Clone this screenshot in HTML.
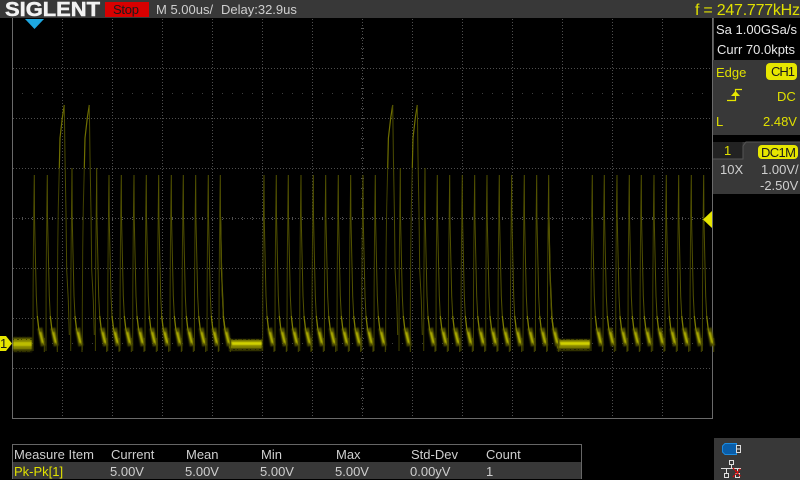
<!DOCTYPE html>
<html lang="en">
<head>
<meta charset="utf-8">
<title>SIGLENT Oscilloscope</title>
<style>
html,body{margin:0;padding:0;background:#000;width:800px;height:480px;overflow:hidden}
svg{display:block}
text{font-family:"Liberation Sans",sans-serif;font-size:13px;fill:#cfcfcf}
.y{fill:#e0e000}
.k{fill:#1a1a1a}
</style>
</head>
<body>
<svg width="800" height="480" viewBox="0 0 800 480" xmlns="http://www.w3.org/2000/svg">
<defs>
<filter id="b" x="-100%" y="-30%" width="300%" height="160%"><feGaussianBlur stdDeviation="0.7"/></filter>
<filter id="n" x="-5%" y="-30%" width="110%" height="160%"><feGaussianBlur stdDeviation="0.6"/></filter>
<g id="d" fill="none">
<path d="M-1.3,351 L-1.2,291 L-.8,240 L-.5,217" stroke="#424200"/>
<path d="M5.5,328 L9,346" stroke="#4c4c00" stroke-width="5" filter="url(#b)"/>
<path d="M3,316 L4.5,329 L7,338 L10,345" stroke="#7c7c00" stroke-width="1.3"/>
<path d="M6,332 L8.5,343" stroke="#b0b000" stroke-width="2.2" filter="url(#b)"/>
<path d="M10,338 L10,352" stroke="#4c4c00"/>
<path d="M.2,217 L1,253 L2,296 L3,316" stroke="#525200"/>
</g>
<g id="p" fill="none">
<use href="#d"/>
<path d="M-.5,217 L-.2,190 L0,175 L.2,217" stroke="#525200"/>
</g>
<g id="q" fill="none">
<use href="#d"/>
<path d="M-.5,217 L-.2,190 L0,168 L.2,217" stroke="#525200"/>
</g>
<g id="t" fill="none">
<path d="M-7,350 L-7,313 L-6.6,250 L-6,207 L-5,168" stroke="#424200"/>
<path d="M-5,168 L-4.3,138 L-2,118 L0,105" stroke="#707000" stroke-width="1.2"/>
<path d="M0,105 L.7,157 L1.7,213 L2.4,270 L4,300 L5,335" stroke="#4c4c00"/>
</g>
</defs>

<!-- grid -->
<g fill="none" stroke="#4e4e4e" shape-rendering="crispEdges">
<path stroke-dasharray="1 2" d="M13,68.5H712M13,118.5H712M13,168.5H712M13,218.5H712M13,268.5H712M13,318.5H712M13,368.5H712"/>
<path stroke-dasharray="1 2" d="M62.5,19V418M112.5,19V418M162.5,19V418M212.5,19V418M262.5,19V418M312.5,19V418M362.5,19V418M412.5,19V418M462.5,19V418M512.5,19V418M562.5,19V418M612.5,19V418M662.5,19V418"/>
<path stroke-dasharray="1 9" stroke="#404040" d="M22,93.5H712M22,343.5H712"/>
<path stroke-dasharray="1 9" stroke="#555" d="M22,217.5H712M22,219.5H712"/>
<path stroke-dasharray="1 9" stroke="#555" d="M361.5,28V418M363.5,28V418"/>
</g>
<path d="M12.5,18V418.5H712.5V18" fill="none" stroke="#6a6a6a" shape-rendering="crispEdges"/>

<!-- baseline bands -->
<g filter="url(#n)">
<rect x="13" y="337" width="19" height="15" fill="#3e3e00"/>
<rect x="13" y="339" width="19" height="10" fill="#858500"/>
<rect x="13" y="342" width="19" height="4" fill="#bcbc00"/>
<rect x="229" y="339" width="33" height="12" fill="#3e3e00"/>
<rect x="229" y="340" width="33" height="8" fill="#858500"/>
<rect x="229" y="342" width="33" height="3" fill="#d0d000"/>
<rect x="557" y="339" width="33" height="12" fill="#3e3e00"/>
<rect x="557" y="340" width="33" height="8" fill="#858500"/>
<rect x="557" y="342" width="33" height="3" fill="#d0d000"/>
</g>
<g fill="none" stroke="#000" stroke-opacity=".45" stroke-dasharray="1 3 2 2 1 4" shape-rendering="crispEdges">
<path d="M13,336.5H32M13,351.5H32M229,349.5H262M557,349.5H590M13,339.5H32M229,339.5H262M557,339.5H590"/>
</g>
<g fill="none">
<path d="M220.5,217 L221.5,270 L223.5,318 L225.5,332 L231,341" stroke="#7c7c00" stroke-width="1.3"/>
<path d="M548.9,217 L549.9,270 L551.9,318 L553.9,332 L559,341" stroke="#7c7c00" stroke-width="1.3"/>
</g>

<!-- pulses -->
<use href="#p" x="34.3"/><use href="#p" x="47.3"/><use href="#t" x="64.3"/><use href="#q" x="72"/><use href="#t" x="89.3"/><use href="#q" x="96.7"/>
<use href="#p" x="109"/><use href="#p" x="121.3"/><use href="#p" x="134"/><use href="#p" x="146.3"/><use href="#p" x="158.7"/><use href="#p" x="171.3"/><use href="#p" x="183.3"/><use href="#p" x="195.7"/><use href="#p" x="208.3"/><use href="#p" x="220.3"/>
<use href="#p" x="264"/><use href="#p" x="276.3"/><use href="#p" x="288.3"/><use href="#p" x="301"/><use href="#p" x="313.3"/><use href="#p" x="325.7"/><use href="#p" x="338.3"/><use href="#p" x="350.7"/><use href="#p" x="363"/><use href="#p" x="375.3"/>
<use href="#t" x="392.7"/><use href="#q" x="400.3"/><use href="#t" x="417.3"/><use href="#q" x="425"/>
<use href="#p" x="437.3"/><use href="#p" x="449.7"/><use href="#p" x="462.3"/><use href="#p" x="474.7"/><use href="#p" x="487"/><use href="#p" x="499.3"/><use href="#p" x="511.7"/><use href="#p" x="524.3"/><use href="#p" x="536.7"/><use href="#p" x="548.7"/>
<use href="#p" x="592.3"/><use href="#p" x="604.3"/><use href="#p" x="617"/><use href="#p" x="629.3"/><use href="#p" x="641.3"/><use href="#p" x="654"/><use href="#p" x="666.3"/><use href="#p" x="678.7"/><use href="#p" x="691.3"/><use href="#p" x="703.7"/>

<!-- header -->
<rect x="0" y="0" width="800" height="18" fill="#383838"/>
<text x="5" y="16" textLength="95" lengthAdjust="spacingAndGlyphs" style="font-size:20px;font-weight:bold;fill:#f2f2f2;stroke:#f2f2f2;stroke-width:.5">SIGLENT</text>
<rect x="105" y="2" width="44" height="15" fill="#d80000"/>
<text x="113" y="14" class="k" textLength="26">Stop</text>
<text x="156" y="14">M 5.00us/</text>
<text x="221" y="14">Delay:32.9us</text>
<text x="695" y="15" class="y" textLength="105" style="font-size:16px">f = 247.777kHz</text>
<path d="M25,19H44L34.5,29Z" fill="#1ea7e0"/>

<!-- markers -->
<path d="M0,336H6L12,343.5L6,351H0Z" fill="#e6e600"/>
<text x="0" y="348" class="k" style="font-size:13px">1</text>
<path d="M712,211V228L703,219.5Z" fill="#e6e600"/>

<!-- right panels -->
<rect x="713" y="18" width="87" height="42" fill="#000"/>
<path d="M713.5,18V60" stroke="#555"/>
<text x="716" y="34" style="fill:#e8e8e8">Sa 1.00GSa/s</text>
<text x="717" y="54" style="fill:#e8e8e8">Curr 70.0kpts</text>

<rect x="713" y="60" width="87" height="75" fill="#383838"/>
<text x="716" y="77" class="y">Edge</text>
<rect x="766" y="63" width="31" height="17" rx="4" fill="#e6e600"/>
<text x="771" y="76" class="k" textLength="24">CH1</text>
<path d="M727,100.5H735.5V89.5H742" fill="none" stroke="#e6e600" stroke-width="1.2"/>
<path d="M731,96H740L735.5,91Z" fill="#e6e600"/>
<text x="777" y="101" class="y">DC</text>
<text x="716" y="126" class="y">L</text>
<text x="763" y="126" class="y">2.48V</text>

<rect x="713" y="142" width="87" height="52" fill="#383838"/>
<path d="M713,142H742.5V159H713Z" fill="#222"/>
<path d="M713,159H743V146L746,142H800" fill="none" stroke="#555"/>
<text x="724" y="155" class="y">1</text>
<rect x="758" y="145" width="40" height="14" rx="4" fill="#e6e600"/>
<text x="761" y="157" class="k" textLength="35">DC1M</text>
<text x="720" y="174">10X</text>
<text x="761" y="174">1.00V/</text>
<text x="760" y="190">-2.50V</text>

<!-- measure table -->
<rect x="13" y="462" width="568" height="17" fill="#383838"/>
<path d="M12.5,479V444.5H581.5V479" fill="none" stroke="#666" shape-rendering="crispEdges"/>
<text x="14" y="459" textLength="80">Measure Item</text>
<text x="111" y="459">Current</text>
<text x="186" y="459">Mean</text>
<text x="261" y="459">Min</text>
<text x="336" y="459">Max</text>
<text x="411" y="459">Std-Dev</text>
<text x="486" y="459">Count</text>
<text x="14" y="476" class="y">Pk-Pk[1]</text>
<text x="110" y="476">5.00V</text>
<text x="185" y="476">5.00V</text>
<text x="260" y="476">5.00V</text>
<text x="335" y="476">5.00V</text>
<text x="410" y="476">0.00yV</text>
<text x="486" y="476">1</text>

<!-- status box -->
<rect x="714" y="438" width="86" height="42" fill="#383838"/>
<path d="M725,443.5H736.5V454.5H725L722.5,452V446Z" fill="#0a5da8" stroke="#1a8ae0"/>
<rect x="736.5" y="445.5" width="4" height="7" fill="#383838" stroke="#ddd"/>
<path d="M736.5,449H740.5" stroke="#ddd"/>
<g fill="none" stroke="#e0e0e0" shape-rendering="crispEdges">
<rect x="729.5" y="460.5" width="4" height="4"/>
<path d="M731.5,465V468.5M721,468.5H741M726.5,468.5V473M737.5,468.5V473"/>
<rect x="724.5" y="473.5" width="4" height="4"/>
<rect x="735.5" y="473.5" width="4" height="4"/>
</g>
<path d="M733,477L741,468M733,468L741,477" stroke="#f00000" stroke-width="1.3" stroke-dasharray="2 1" fill="none"/>
</svg>
</body>
</html>
